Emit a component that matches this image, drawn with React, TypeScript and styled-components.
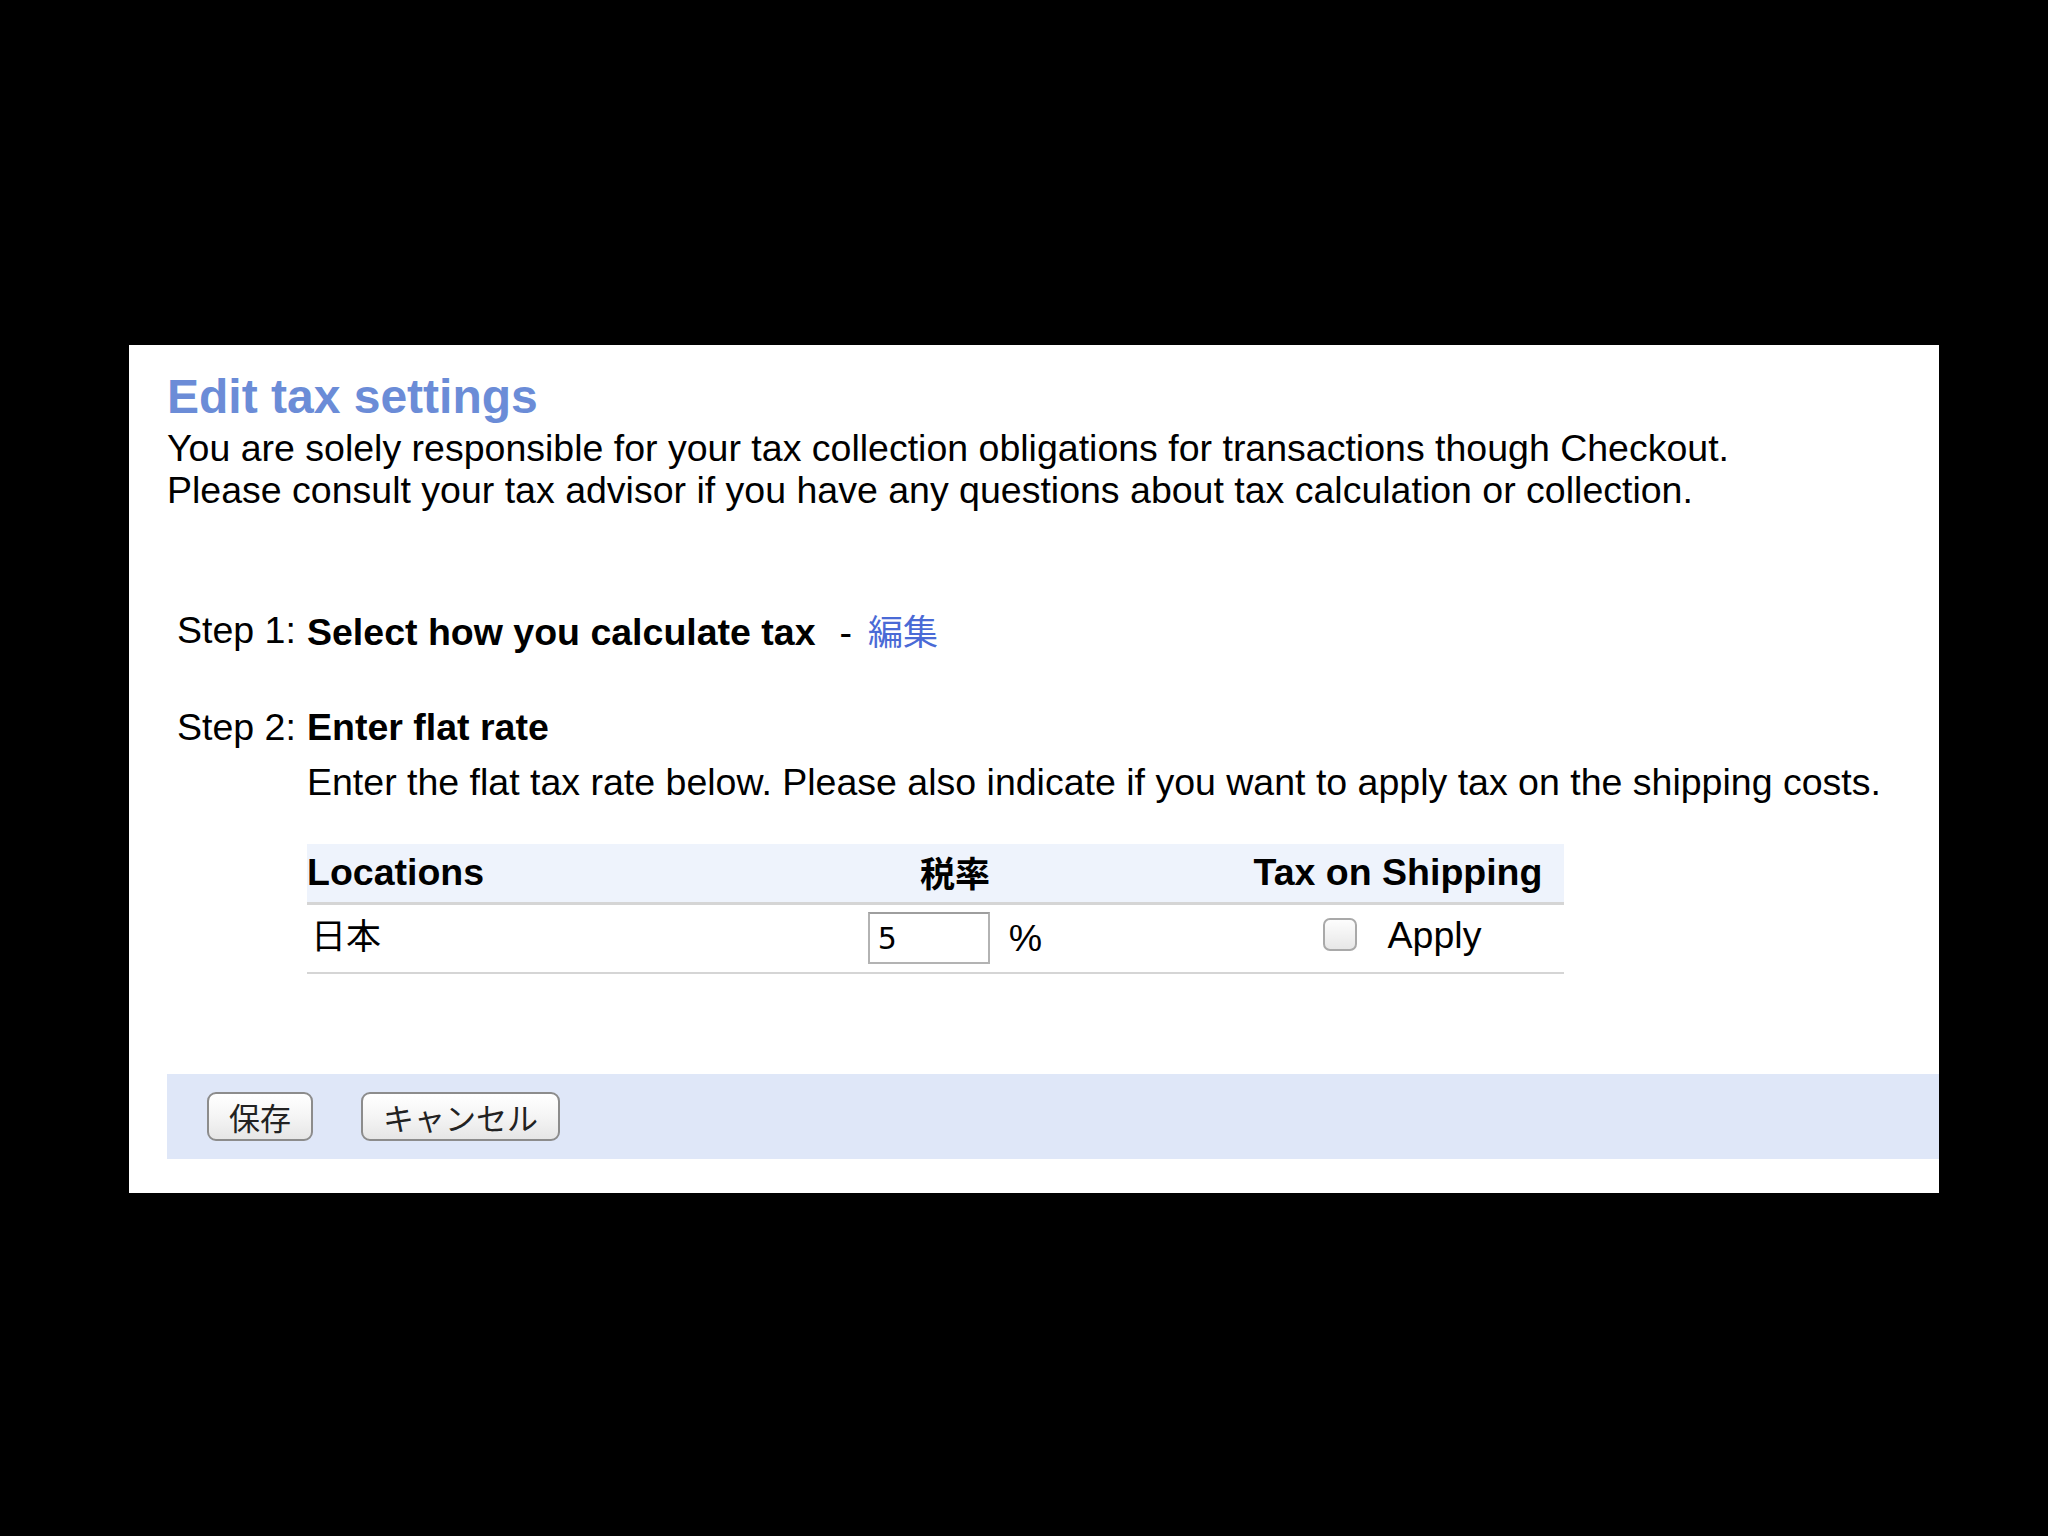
import React from "react";
import styled, { createGlobalStyle } from "styled-components";

const GlobalStyle = createGlobalStyle`
  html, body {
    margin: 0;
    padding: 0;
    background: #000;
  }
  body {
    font-family: "Liberation Sans", Arial, "Noto Sans CJK JP", sans-serif;
    color: #000;
  }
  * { box-sizing: border-box; }
`;

const Page = styled.div`
  min-height: 1536px;
  padding: 345px 0 0 129px;
`;

const Panel = styled.section`
  width: 1810px;
  background: #fff;
  padding: 27px 0 34px 38px;
`;

const Title = styled.h1`
  margin: 0;
  font-family: "Liberation Sans", Arial, sans-serif;
  font-weight: 700;
  font-size: 48px;
  line-height: 50px;
  color: #6b8cd7;
`;

const Intro = styled.p`
  margin: 5px 0 0;
  font-size: 37.5px;
  line-height: 42px;
`;

const Steps = styled.div`
  margin: 98px 0 0 10px;
  display: flex;
  flex-direction: column;
  gap: 55px;
`;

const StepRow = styled.div`
  display: grid;
  grid-template-columns: 130px 1fr;
  font-size: 37.5px;
  line-height: 42px;
`;

const StepLabel = styled.div`
  white-space: nowrap;
`;

const StepBody = styled.div`
  display: flex;
  flex-direction: column;
`;

const StepHead = styled.div`
  display: flex;
  align-items: baseline;
  white-space: nowrap;
  height: 42px;
`;

const Strong = styled.span`
  font-weight: 700;
`;

const Dash = styled.span`
  margin: 0 16px 0 24px;
`;

const EditLink = styled.a`
  font-family: "Noto Sans CJK JP", sans-serif;
  font-size: 35px;
  line-height: 42px;
  color: #4a6ad6;
  text-decoration: none;
  cursor: pointer;
`;

const Description = styled.p`
  margin: 13px 0 0;
  white-space: nowrap;
`;

const Table = styled.table`
  margin-top: 41px;
  width: 1257px;
  border-collapse: collapse;
  table-layout: fixed;
`;

const Th = styled.th<{ $align?: string; $w: number }>`
  width: ${(p) => p.$w}px;
  height: 59px;
  text-align: ${(p) => p.$align || "center"};
  vertical-align: top;
  background: #eef3fc;
  font-weight: 700;
  font-size: 37.5px;
  line-height: 42px;
  padding: 7px 0 0;
  border-bottom: 3px solid #d5d5d5;
  white-space: nowrap;
`;

const HeadText = styled.span`
  display: inline-block;
  height: 42px;
  line-height: 42px;
  vertical-align: top;
`;

const CjkHead = styled(HeadText)`
  font-family: "Noto Sans CJK JP", sans-serif;
  font-size: 35px;
  font-weight: 700;
`;

const Td = styled.td<{ $align?: string }>`
  height: 70px;
  padding: 0;
  text-align: ${(p) => p.$align || "center"};
  vertical-align: middle;
  border-bottom: 2px solid #d5d5d5;
  font-size: 37.5px;
  line-height: 42px;
`;

const Place = styled.span`
  display: inline-block;
  font-family: "Noto Sans CJK JP", sans-serif;
  font-size: 35px;
  line-height: 42px;
  padding-left: 4px;
  margin-bottom: 8px;
`;

const Inline = styled.span`
  display: inline-flex;
  align-items: center;
  gap: 19px;
  vertical-align: middle;
`;

const RateInput = styled.input`
  width: 122px;
  height: 52px;
  border: 2px solid #b3b3b3;
  border-top-color: #9e9e9e;
  padding: 0 8px;
  font-family: "DejaVu Sans", "Liberation Sans", sans-serif;
  font-size: 30px;
  color: #000;
  background: #fff;
  outline: none;
`;

const CheckBox = styled.input`
  appearance: none;
  -webkit-appearance: none;
  margin: 0;
  width: 34px;
  height: 33px;
  border: 2px solid #a9a9a9;
  border-radius: 7px;
  background: linear-gradient(#fdfdfd, #e7e7e7);
`;

const ApplyInline = styled(Inline)`
  gap: 31px;
  margin-left: 8px;
  margin-bottom: 7px;
`;

const ButtonBar = styled.div`
  margin-top: 100px;
  height: 85px;
  background: #dfe7f8;
  display: flex;
  align-items: center;
  gap: 48px;
  padding: 0 0 0 40px;
`;

const Button = styled.button`
  height: 49px;
  padding: 0 20px;
  border: 2px solid #8c8c8c;
  border-radius: 9px;
  background: linear-gradient(#ffffff 0%, #f6f6f6 45%, #e6e6e6 100%);
  font-family: "Noto Sans CJK JP", sans-serif;
  font-size: 31px;
  line-height: 1;
  color: #222;
  cursor: pointer;
`;

export default function App() {
  return (
    <>
      <GlobalStyle />
      <Page>
        <Panel>
          <Title>Edit tax settings</Title>
          <Intro>
            You are solely responsible for your tax collection obligations for transactions though Checkout.
            <br />
            Please consult your tax advisor if you have any questions about tax calculation or collection.
          </Intro>
          <Steps>
            <StepRow>
              <StepLabel>Step 1:</StepLabel>
              <StepBody>
                <StepHead>
                  <Strong>Select how you calculate tax</Strong>
                  <Dash>-</Dash>
                  <EditLink>編集</EditLink>
                </StepHead>
              </StepBody>
            </StepRow>
            <StepRow>
              <StepLabel>Step 2:</StepLabel>
              <StepBody>
                <StepHead>
                  <Strong>Enter flat rate</Strong>
                </StepHead>
                <Description>
                  Enter the flat tax rate below. Please also indicate if you want to apply tax on the shipping costs.
                </Description>
                <Table>
                  <thead>
                    <tr>
                      <Th $w={371} $align="left">
                        <HeadText>Locations</HeadText>
                      </Th>
                      <Th $w={554}>
                        <CjkHead>税率</CjkHead>
                      </Th>
                      <Th $w={332}>
                        <HeadText>Tax on Shipping</HeadText>
                      </Th>
                    </tr>
                  </thead>
                  <tbody>
                    <tr>
                      <Td $align="left">
                        <Place>日本</Place>
                      </Td>
                      <Td>
                        <Inline>
                          <RateInput type="text" defaultValue="5" />
                          <span>%</span>
                        </Inline>
                      </Td>
                      <Td>
                        <ApplyInline>
                          <CheckBox type="checkbox" />
                          <span>Apply</span>
                        </ApplyInline>
                      </Td>
                    </tr>
                  </tbody>
                </Table>
              </StepBody>
            </StepRow>
          </Steps>
          <ButtonBar>
            <Button>保存</Button>
            <Button>キャンセル</Button>
          </ButtonBar>
        </Panel>
      </Page>
    </>
  );
}
